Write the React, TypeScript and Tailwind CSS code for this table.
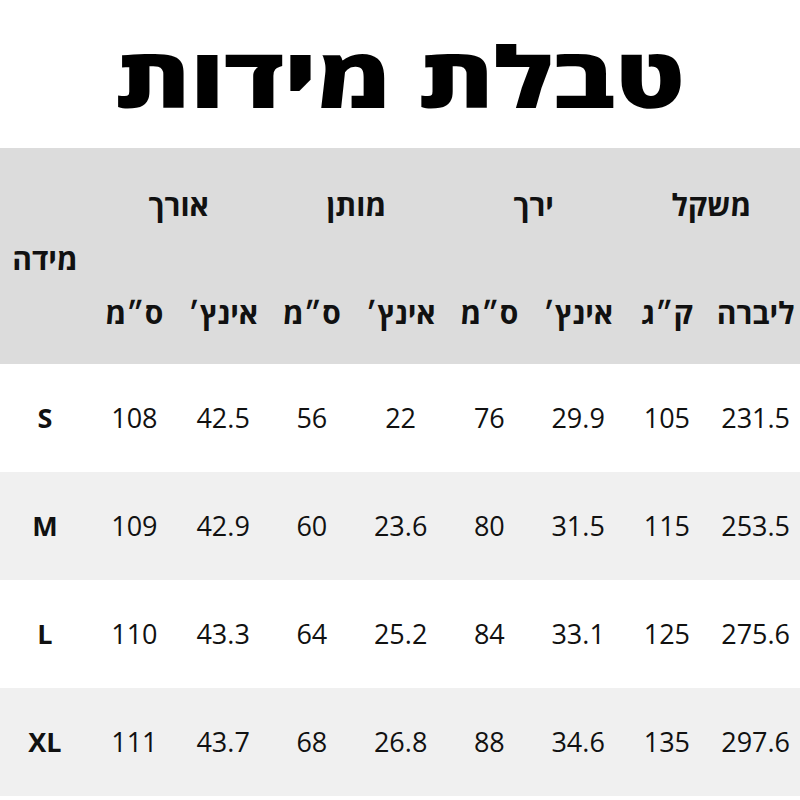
import React from 'react';

// Size chart rows: size, length cm/in, waist cm/in, hip cm/in, weight kg/lb
const rows = [
  { size: 'S', values: ['108', '42.5', '56', '22', '76', '29.9', '105', '231.5'] },
  { size: 'M', values: ['109', '42.9', '60', '23.6', '80', '31.5', '115', '253.5'] },
  { size: 'L', values: ['110', '43.3', '64', '25.2', '84', '33.1', '125', '275.6'] },
  { size: 'XL', values: ['111', '43.7', '68', '26.8', '88', '34.6', '135', '297.6'] },
];

const groups = ['אורך', 'מותן', 'ירך', 'משקל'];
const units = ['ס״מ', 'אינץ׳', 'ס״מ', 'אינץ׳', 'ס״מ', 'אינץ׳', 'ק״ג', 'ליברה'];

export default function App() {
  return (
    <div
      className="w-[800px] h-[800px] bg-white text-[#111] overflow-hidden"
      style={{ fontFamily: '"Open Sans", "Liberation Sans", "DejaVu Sans", sans-serif' }}
    >
      {/* Title */}
      <div className="h-[148px] flex items-center justify-center">
        <h1 dir="rtl" className="text-[84px] font-extrabold leading-none text-black mt-[4px] scale-x-[1.27]">
          טבלת מידות
        </h1>
      </div>

      {/* Header */}
      <div className="grid grid-cols-[90px_repeat(8,1fr)] grid-rows-[108px_108px] h-[216px] bg-[#dcdcdc] font-bold text-[30px]">
        <div dir="rtl" className="row-span-2 flex items-center justify-center pt-1">
          מידה
        </div>
        {groups.map((g) => (
          <div key={g} dir="rtl" className="col-span-2 flex items-center justify-center pt-1">
            {g}
          </div>
        ))}
        {units.map((u, i) => (
          <div key={i} dir="rtl" className="flex items-center justify-center pt-1">
            {u}
          </div>
        ))}
      </div>

      {/* Body */}
      {rows.map((row, idx) => (
        <div
          key={row.size}
          className={`grid grid-cols-[90px_repeat(8,1fr)] h-[108px] text-[27px] ${
            idx % 2 === 1 ? 'bg-[#f0f0f0]' : 'bg-white'
          }`}
        >
          <div className="flex items-center justify-center font-bold">{row.size}</div>
          {row.values.map((v, i) => (
            <div key={i} className="flex items-center justify-center">
              {v}
            </div>
          ))}
        </div>
      ))}
    </div>
  );
}
